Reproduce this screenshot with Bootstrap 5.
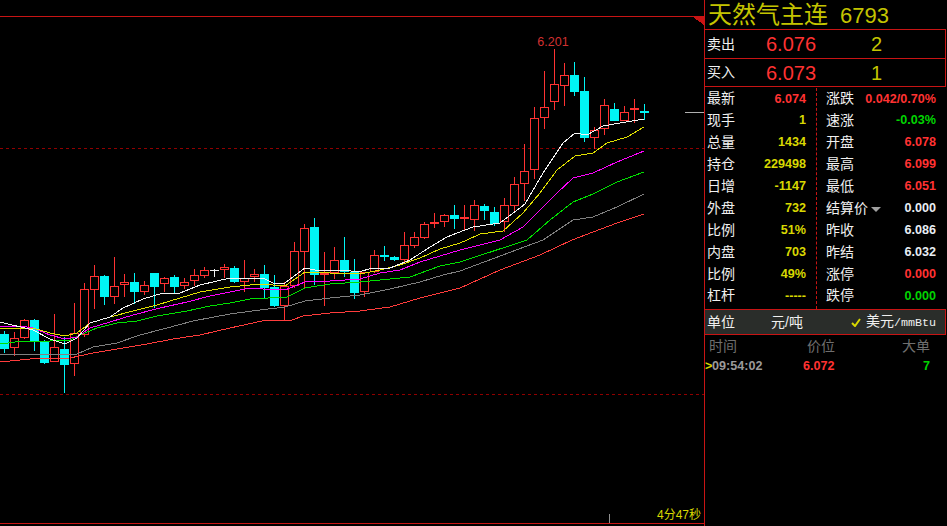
<!DOCTYPE html>
<html lang="zh-CN">
<head>
    <meta charset="UTF-8">
    <meta name="viewport" content="width=device-width, initial-scale=1.0">
    <title>天然气主连 6793</title>
    <link href="https://cdn.jsdelivr.net/npm/bootstrap@5.3.0/dist/css/bootstrap.min.css" rel="stylesheet">
    <style>
        html, body {
            height: 526px;
            overflow: hidden;
            background: #000;
        }
        body {
            font-family: "Liberation Sans", "Noto Sans CJK SC", sans-serif;
            color: #f0f0f0;
        }
        #chart-svg {
            display: block;
            flex: 0 0 704px;
        }
        .quote-panel {
            flex: 0 0 243px;
            height: 526px;
            border-left: 1px solid #c81414;
        }
        .title-row {
            height: 29px;
            padding-left: 3px;
            font-size: 24px;
            line-height: 29px;
            color: #c4c400;
            white-space: nowrap;
        }
        .title-row b {
            font-weight: 400;
            font-size: 22px;
            margin-left: 12px;
        }
        .depth-box {
            width: 241px;
            border-top: 1px solid #c81414;
            border-right: 1px solid #c81414;
        }
        .depth-row {
            height: 28.5px;
            padding: 1px 0 0 2px;
            font-size: 14px;
            border-bottom: 1px solid #c81414;
        }
        .depth-label { width: 59px; }
        .depth-price {
            width: 92px;
            font-size: 20px;
            color: #ff3232;
        }
        .depth-size {
            width: 37px;
            font-size: 20px;
            color: #c4c400;
            text-align: center;
        }
        .stat-grid {
            height: 222px;
            padding-top: 1px;
        }
        .stat-col {
            flex: 0 0 111px;
            padding: 0 10px 0 2px;
        }
        .stat-col + .stat-col {
            flex: 0 0 129px;
            padding: 0 9px;
            border-left: 1px dashed #c81414;
        }
        .stat-row {
            height: 21.9px;
            font-size: 14px;
            white-space: nowrap;
        }
        .stat-row span:last-child {
            font-size: 12.6px;
            font-weight: 700;
        }
        .val-red { color: #ff3232; }
        .val-yellow { color: #d8d800; }
        .val-green { color: #00d400; }
        .val-white { color: #e8eef4; }
        .tri-down {
            display: inline-block;
            width: 0;
            height: 0;
            margin-left: 3px;
            vertical-align: 1px;
            border: 5px solid transparent;
            border-top: 5px solid #a0a0a0;
            border-bottom: 0;
        }
        .unit-row {
            width: 241px;
            height: 26px;
            padding: 0 9px 0 2px;
            font-size: 14px;
            white-space: nowrap;
            background: #2a2d2a;
            border: 1px solid #c81414;
            border-left: 0;
        }
        .unit-a { margin-left: 36px; }
        .unit-row svg {
            margin-left: auto;
            margin-right: 5px;
        }
        .unit-mono {
            font-family: "Liberation Mono", monospace;
            font-size: 11.7px;
        }
        .tick-head {
            height: 22px;
            padding-left: 4px;
            font-size: 14px;
            color: #6f6f6f;
        }
        .head-time { width: 98px; }
        .head-price { width: 95px; }
        .tick-row {
            height: 18px;
            font-size: 12.6px;
            font-weight: 700;
        }
        .tick-arrow { color: #d8d800; width: 7px; }
        .tick-time { color: #9a9a9a; width: 91px; }
        .tick-price { color: #ff3232; width: 120px; }
        .tick-size { color: #00d400; }
    </style>
</head>
<body>

    <div class="d-flex">
        <svg id="chart-svg" width="704" height="526" viewBox="0 0 704 526" shape-rendering="crispEdges"></svg>

        <div class="quote-panel">
            <div class="title-row">天然气主连<b>6793</b></div>
            <div class="depth-box">
                <div class="depth-row d-flex align-items-center">
                    <span class="depth-label">卖出</span><span class="depth-price">6.076</span><span class="depth-size">2</span>
                </div>
                <div class="depth-row d-flex align-items-center">
                    <span class="depth-label">买入</span><span class="depth-price">6.073</span><span class="depth-size">1</span>
                </div>
            </div>

            <div class="stat-grid d-flex">
                <div class="stat-col">
                    <div class="stat-row d-flex justify-content-between align-items-center"><span>最新</span><span class="val-red">6.074</span></div>
                    <div class="stat-row d-flex justify-content-between align-items-center"><span>现手</span><span class="val-yellow">1</span></div>
                    <div class="stat-row d-flex justify-content-between align-items-center"><span>总量</span><span class="val-yellow">1434</span></div>
                    <div class="stat-row d-flex justify-content-between align-items-center"><span>持仓</span><span class="val-yellow">229498</span></div>
                    <div class="stat-row d-flex justify-content-between align-items-center"><span>日增</span><span class="val-yellow">-1147</span></div>
                    <div class="stat-row d-flex justify-content-between align-items-center"><span>外盘</span><span class="val-yellow">732</span></div>
                    <div class="stat-row d-flex justify-content-between align-items-center"><span>比例</span><span class="val-yellow">51%</span></div>
                    <div class="stat-row d-flex justify-content-between align-items-center"><span>内盘</span><span class="val-yellow">703</span></div>
                    <div class="stat-row d-flex justify-content-between align-items-center"><span>比例</span><span class="val-yellow">49%</span></div>
                    <div class="stat-row d-flex justify-content-between align-items-center"><span>杠杆</span><span class="val-yellow">-----</span></div>
                </div>
                <div class="stat-col">
                    <div class="stat-row d-flex justify-content-between align-items-center"><span>涨跌</span><span class="val-red">0.042/0.70%</span></div>
                    <div class="stat-row d-flex justify-content-between align-items-center"><span>速涨</span><span class="val-green">-0.03%</span></div>
                    <div class="stat-row d-flex justify-content-between align-items-center"><span>开盘</span><span class="val-red">6.078</span></div>
                    <div class="stat-row d-flex justify-content-between align-items-center"><span>最高</span><span class="val-red">6.099</span></div>
                    <div class="stat-row d-flex justify-content-between align-items-center"><span>最低</span><span class="val-red">6.051</span></div>
                    <div class="stat-row d-flex justify-content-between align-items-center"><div>结算价<i class="tri-down"></i></div><span class="val-white">0.000</span></div>
                    <div class="stat-row d-flex justify-content-between align-items-center"><span>昨收</span><span class="val-white">6.086</span></div>
                    <div class="stat-row d-flex justify-content-between align-items-center"><span>昨结</span><span class="val-white">6.032</span></div>
                    <div class="stat-row d-flex justify-content-between align-items-center"><span>涨停</span><span class="val-red">0.000</span></div>
                    <div class="stat-row d-flex justify-content-between align-items-center"><span>跌停</span><span class="val-green">0.000</span></div>
                </div>
            </div>

            <div class="unit-row d-flex align-items-center">
                <span>单位</span><span class="unit-a">元/吨</span>
                <svg width="10" height="9" viewBox="0 0 10 9"><path d="M1 5 L4 8 L9 1" fill="none" stroke="#d8d800" stroke-width="2"/></svg>
                <span>美元<span class="unit-mono">/mmBtu</span></span>
            </div>

            <div class="tick-head d-flex align-items-center">
                <span class="head-time">时间</span><span class="head-price">价位</span><span>大单</span>
            </div>
            <div class="tick-row d-flex align-items-center">
                <span class="tick-arrow">&gt;</span><span class="tick-time">09:54:02</span><span class="tick-price">6.072</span><span class="tick-size">7</span>
            </div>
        </div>
    </div>

    <script src="https://cdn.jsdelivr.net/npm/bootstrap@5.3.0/dist/js/bootstrap.bundle.min.js"></script>

    <script>
        // one bar per 10px: body top, body bottom, wick top, wick bottom, colour (r/c/w)
        const bars = [
            [334,349,331,353,'c'],[338,348,332,356,'r'],[320,338,319,339,'r'],[320,342,319,351,'c'],
            [342,363,340,364,'c'],[347,362,314,362,'r'],[349,365,337,393,'c'],[333,364,303,376,'r'],
            [289,335,283,337,'r'],[276,290,265,309,'r'],[276,297,275,305,'c'],[286,297,257,304,'r'],
            [282,285,274,297,'r'],[282,292,273,304,'c'],[285,292,281,295,'r'],[273,287,273,308,'c'],
            [278,284,277,292,'r'],[277,287,275,293,'c'],[282,286,278,289,'r'],[275,281,269,286,'r'],
            [270,276,267,278,'r'],[270,270,269,277,'w'],[267,270,264,278,'r'],[268,282,266,283,'c'],
            [278,282,260,292,'r'],[274,277,269,282,'r'],[274,288,265,298,'c'],[287,306,275,307,'c'],
            [286,306,282,320,'r'],[251,286,242,288,'r'],[228,252,224,288,'r'],[227,275,218,285,'c'],
            [273,275,252,306,'r'],[260,273,247,279,'r'],[260,272,237,277,'c'],[272,293,259,299,'c'],
            [272,292,272,297,'r'],[255,272,250,273,'r'],[255,257,246,261,'c'],[257,260,256,261,'c'],
            [245,260,232,262,'r'],[237,246,232,248,'r'],[224,238,222,239,'r'],[222,224,213,228,'r'],
            [215,222,214,227,'r'],[215,219,205,229,'c'],[217,219,205,231,'r'],[205,220,200,231,'r'],
            [206,211,204,220,'c'],[212,224,207,226,'c'],[205,222,198,232,'r'],[184,206,177,212,'r'],
            [171,184,144,201,'r'],[118,170,107,179,'r'],[107,118,71,129,'r'],[84,102,49,110,'r'],
            [75,86,63,106,'r'],[75,92,62,96,'c'],[91,138,77,142,'c'],[130,138,127,149,'r'],
            [105,129,99,135,'r'],[109,121,103,121,'c'],[112,121,106,121,'r'],[108,110,99,123,'r'],
            [111,113,104,120,'c']
        ];

        const averages = [
            ['#ff3c3c', [[0,362],[30,359],[70,358],[93,353],[123,348],[147,344],[173,339],[200,335],[230,328],[262,321],[292,320],[303,316],[330,313],[360,311],[390,307],[420,298],[440,293],[460,288],[500,270],[540,255],[572,240],[593,232],[617,223],[644,214]]],
            ['#808080', [[0,355],[20,354],[77,354],[93,347],[117,343],[140,335],[167,328],[193,321],[230,314],[260,310],[285,307],[305,301],[330,298],[360,295],[390,289],[420,282],[443,275],[460,271],[543,240],[573,220],[593,217],[617,207],[644,194]]],
            ['#00e000', [[0,344],[23,341],[50,341],[70,340],[80,335],[97,328],[117,323],[137,321],[157,316],[187,311],[210,306],[230,303],[250,299],[287,297],[305,288],[330,284],[360,282],[380,280],[410,277],[440,266],[460,262],[527,240],[550,220],[573,202],[593,194],[617,182],[644,172]]],
            ['#ff00ff', [[0,327],[20,326],[33,328],[50,335],[65,339],[77,337],[90,328],[110,322],[133,315],[160,308],[187,302],[210,296],[230,292],[250,288],[263,289],[285,290],[305,282],[330,281],[360,279],[380,273],[400,270],[420,262],[440,256],[460,250],[500,240],[523,227],[540,210],[557,193],[573,178],[593,173],[617,162],[644,151]]],
            ['#e0e000', [[0,328],[33,328],[50,333],[65,336],[77,333],[90,323],[110,317],[133,311],[157,305],[180,298],[200,292],[230,287],[260,284],[285,286],[305,272],[330,273],[360,274],[380,270],[400,265],[420,258],[440,249],[460,243],[467,240],[480,234],[503,231],[523,213],[540,193],[557,170],[575,156],[593,153],[607,143],[627,137],[644,127]]],
            ['#f4f4f4', [[0,322],[33,330],[50,339],[65,344],[77,338],[90,323],[110,317],[123,308],[143,299],[163,293],[180,293],[200,285],[230,278],[263,278],[273,283],[285,283],[305,268],[320,271],[343,270],[358,272],[373,268],[390,268],[410,260],[430,247],[447,237],[457,233],[473,227],[500,223],[525,204],[543,173],[563,143],[575,133],[587,135],[603,126],[620,123],[644,119]]]
        ];

        function drawChart() {
            const colours = { r: '#ff3232', c: '#00f5f5', w: '#f0f0f0' };
            let out = '';

            out += '<line x1="0" y1="148.5" x2="704" y2="148.5" stroke="#900000" stroke-dasharray="3 3"/>';
            out += '<line x1="0" y1="394.5" x2="704" y2="394.5" stroke="#900000" stroke-dasharray="3 3"/>';

            bars.forEach((b, i) => {
                const cx = i * 10 + 4.5;
                const c = colours[b[4]];
                out += `<line x1="${cx}" y1="${b[2]}" x2="${cx}" y2="${b[3]}" stroke="${c}"/>`;
                if (b[4] === 'w') {
                    out += `<line x1="${cx - 4.5}" y1="${b[0] + 0.5}" x2="${cx + 4.5}" y2="${b[0] + 0.5}" stroke="${c}"/>`;
                } else if (b[4] === 'c') {
                    out += `<rect x="${cx - 4.5}" y="${b[0]}" width="9" height="${b[1] - b[0]}" fill="${c}"/>`;
                } else {
                    out += `<rect x="${cx - 4}" y="${b[0] + 0.5}" width="8" height="${b[1] - b[0] - 1}" fill="#000" stroke="${c}"/>`;
                }
            });

            averages.forEach(a => {
                const pts = a[1].map(p => p.join(',')).join(' ');
                out += `<polyline points="${pts}" fill="none" stroke="${a[0]}"/>`;
            });

            // frame and small marks
            out += '<line x1="0" y1="16.5" x2="704" y2="16.5" stroke="#c81414"/>';
            out += '<line x1="0" y1="523.5" x2="704" y2="523.5" stroke="#c81414"/>';
            out += '<polygon points="693,17 704,17 704,25" fill="#c81414"/>';
            out += '<line x1="685" y1="112.5" x2="704" y2="112.5" stroke="#b0b0b0"/>';
            out += '<line x1="609.5" y1="514" x2="609.5" y2="523" stroke="#909090"/>';
            out += '<text x="553" y="46" text-anchor="middle" font-size="12.5" fill="#d23030" font-family="Liberation Sans">6.201</text>';
            out += '<text x="657" y="519" font-size="12" fill="#d8d800" font-family="Liberation Sans, Noto Sans CJK SC">4分47秒</text>';

            document.getElementById('chart-svg').innerHTML = out;
        }

        drawChart();
    </script>

</body>
</html>
